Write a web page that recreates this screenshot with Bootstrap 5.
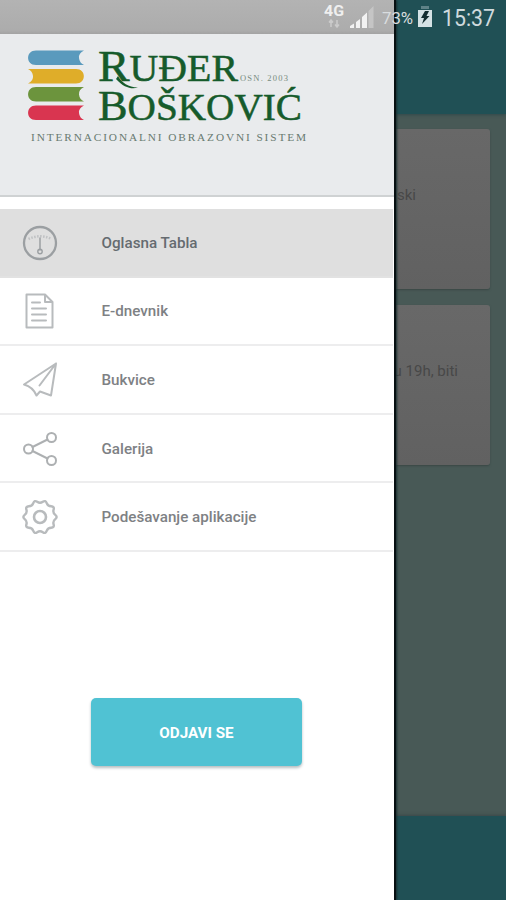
<!DOCTYPE html>
<html lang="sr-Latn">
<head>
<meta charset="utf-8">
<meta name="viewport" content="width=device-width, initial-scale=1">
<title>Ruđer Bošković</title>
<link href="https://cdn.jsdelivr.net/npm/bootstrap@5.3.0/dist/css/bootstrap.min.css" rel="stylesheet">
<style>
body{font-family:Roboto,"Liberation Sans",sans-serif;height:900px;overflow:hidden;background:#485956}
.board{height:900px}
.board-top{height:114px;background:#205055;box-shadow:0 1px 3px #30484b}
.board-bottom{height:84px;background:#205055;box-shadow:0 -1px 3px #3b4748}
.board-body{padding:15px 16px 0;gap:16px}
.notice{height:160px;background:linear-gradient(#686868,#616161);border-radius:3px;box-shadow:0 1px 2px #394745;color:#484848;font-size:15px;line-height:20px;padding:56px 0 0}
.notice.first span{margin-right:74px}
.notice.second span{margin-right:32px}
.drawer{width:396px;height:900px;background:#fff;border-right:2px solid #071012;box-shadow:1px 0 2px #172c2e}
.brand{height:197px;background:#e9ebed;border-bottom:2px solid #cfd2d3;padding-top:34px}
.menu{margin-top:12px;width:393px}
.menu .list-group-item,.menu .list-group-item:last-child{height:68.6px;padding:1px 0 0 22px;border-width:0 0 2px;border-color:#ededee;color:#7e8184;font-size:15.200px;font-weight:500;line-height:20px;gap:43.500px}
.menu .list-group-item.current{background:#dfdfdf;border-color:#e2e2e2;color:#656b70}
.menu svg{width:36px;height:36px;fill:none;stroke:#b8bbbd;stroke-width:2;stroke-linejoin:round;stroke-linecap:round}
.logout{width:211px;height:68px;margin:146px 0 0 91px;padding-top:8px;background:#50c2d3;color:#fff;border:0;border-radius:5px;font-size:15.200px;font-weight:700;box-shadow:0 2px 3px #b6bec1}
.logout:hover{background:#50c2d3;color:#fff}
.status{height:34px}
.status-shade{width:394px;height:34px;background:linear-gradient(#b3b3b3,#acacac 90%,#a3a3a3)}
</style>
</head>
<body>
<div class="position-relative overflow-hidden">
  <div class="board d-flex flex-column">
    <header class="board-top flex-shrink-0"></header>
    <main class="board-body d-flex flex-column flex-grow-1">
      <article class="notice first text-end"><span>ski</span></article>
      <article class="notice second text-end"><span>u 19h, biti</span></article>
    </main>
    <footer class="board-bottom flex-shrink-0"></footer>
  </div>

  <aside class="drawer position-absolute top-0 start-0">
    <div class="brand">
      <svg class="d-block" width="394" height="120" viewBox="0 34 394 120" role="img" aria-label="Ruđer Bošković">
        <path fill="#5a9abd" d="M36 50.500H84Q78.500 53 79 58Q79.500 63 84 65H36C25.500 65 25.500 50.500 36 50.500Z"/>
        <path fill="#dfad29" d="M28 69H76C86.500 69 86.500 83.500 76 83.500H28Q33.500 81 33 76Q32.500 71 28 69Z"/>
        <path fill="#6c943d" d="M36 87H84Q78.500 89.500 79 94.500Q79.500 99.500 84 101.500H36C25.500 101.500 25.500 87 36 87Z"/>
        <path fill="#d93550" d="M36 105.500H84Q78.500 108 79 113Q79.500 118 84 120H36C25.500 120 25.500 105.500 36 105.500Z"/>
        <g fill="#165b2b" stroke="#165b2b" stroke-width=".5" font-family="'Liberation Serif',serif">
          <text x="98" y="81" font-size="44" textLength="140" lengthAdjust="spacingAndGlyphs">R<tspan font-size="37">UĐER</tspan></text>
          <text x="98" y="120" font-size="43" textLength="204" lengthAdjust="spacingAndGlyphs">B<tspan font-size="38">OŠKOVIĆ</tspan></text>
        </g>
        <path fill="#165b2b" d="M118 76C122 83 128 87 138 87.500C132 89.500 124 88 116 79Z"/>
        <g fill="#788b7f" font-family="'Liberation Serif',serif">
          <text x="240" y="81" font-size="8.500" textLength="48">OSN. 2003</text>
          <text x="31" y="141" font-size="11.300" textLength="275" fill="#687a70">INTERNACIONALNI OBRAZOVNI SISTEM</text>
        </g>
      </svg>
    </div>
    <nav class="menu list-group list-group-flush">
      <a class="list-group-item current d-flex align-items-center" href="#">
        <svg viewBox="0 0 36 36" style="stroke:#9b9fa2"><circle cx="18" cy="18" r="16" stroke-width="2.300"/><path d="M6.500 14Q18 8.500 29.500 14" stroke="#bfc1c3" stroke-width="2.500" stroke-dasharray="1.500 1.500" stroke-linecap="butt"/><path d="M18 13V25" stroke-width="1.500"/><circle cx="18" cy="26.500" r="2.200" stroke-width="1.400"/></svg>
        Oglasna Tabla</a>
      <a class="list-group-item d-flex align-items-center" href="#">
        <svg viewBox="0 0 36 36"><path d="M4.500 1.500H23L30.500 9V34.500H4.500ZM23 1.500V9H30.500M10 9.500H18M10 15.500H24M10 21.500H24M10 27.500H24"/></svg>
        E-dnevnik</a>
      <a class="list-group-item d-flex align-items-center" href="#">
        <svg viewBox="0 0 36 36"><path d="M34 1.500L2 22.500Q11 25 14.500 33.500L18 29.500L29 33.500ZM34 1.500L17.500 23.500"/></svg>
        Bukvice</a>
      <a class="list-group-item d-flex align-items-center" href="#">
        <svg viewBox="0 0 36 36" style="stroke:#adb0b2"><circle cx="6.500" cy="18" r="4.500"/><circle cx="29.500" cy="6.500" r="4.500"/><circle cx="29.500" cy="29.500" r="4.500"/><path d="M10.500 16L25.500 8.500M10.500 20L25.500 27.500"/></svg>
        Galerija</a>
      <a class="list-group-item d-flex align-items-center" href="#">
        <svg viewBox="0 0 36 36"><path stroke-width="2.400" d="M33.300 20.100Q30.650 22.110 31.600 25.300Q32.560 28.580 29.200 28.700Q25.820 28.760 24.700 31.900Q23.560 35.120 20.800 33.200Q18 31.300 15.200 33.200Q12.440 35.120 11.300 31.900Q10.180 28.760 6.800 28.700Q3.440 28.580 4.400 25.300Q5.350 22.110 2.700 20.100Q0 18 2.700 15.900Q5.350 13.890 4.400 10.700Q3.440 7.420 6.800 7.300Q10.180 7.240 11.300 4.100Q12.440 .88 15.200 2.800Q18 4.700 20.800 2.800Q23.560 .88 24.700 4.100Q25.820 7.240 29.200 7.300Q32.560 7.420 31.600 10.700Q30.650 13.890 33.300 15.900Q36 18 33.300 20.100Z"/><circle cx="18" cy="18" r="6" stroke-width="2.600"/></svg>
        Podešavanje aplikacije</a>
    </nav>
    <button class="logout btn d-block" type="button">ODJAVI SE</button>
  </aside>

  <div class="status-shade position-absolute top-0 start-0"></div>
  <div class="status position-absolute top-0 start-0 w-100">
    <svg class="d-block" width="506" height="34" viewBox="0 0 506 34" font-family="Roboto,sans-serif">
      <text x="324" y="16" font-size="15" font-weight="700" fill="#efefef" textLength="20" lengthAdjust="spacingAndGlyphs">4G</text>
      <path d="M331 20V27M329 22.500L331 20L333 22.500M337 20V27M335 24.500L337 27L339 24.500" stroke="#cbcbcb" stroke-width="1.500" fill="none"/>
      <path fill="#f2f2f2" d="M350 28V26L354 23.500V28ZM356 28V22L360 19V28ZM362 28V17L367 12.500V28Z"/>
      <path fill="#c5c5c5" d="M368.500 28V11L373.500 6V28Z"/>
      <text x="382" y="24" font-size="17" fill="#d9dddf" textLength="31" lengthAdjust="spacingAndGlyphs">73%</text>
      <path fill="#d5e2e5" d="M418 10H432V27H418Z"/><path fill="#5f8287" d="M421 6H429V9H421Z"/>
      <path fill="#122c30" d="M425 11H429L426.500 16H429.500L422 24L424 18H421Z"/>
      <text x="442" y="26" font-size="24" fill="#cfdadd" textLength="53" lengthAdjust="spacingAndGlyphs">15:37</text>
    </svg>
  </div>
</div>
<script src="https://cdn.jsdelivr.net/npm/bootstrap@5.3.0/dist/js/bootstrap.bundle.min.js"></script>
</body>
</html>
